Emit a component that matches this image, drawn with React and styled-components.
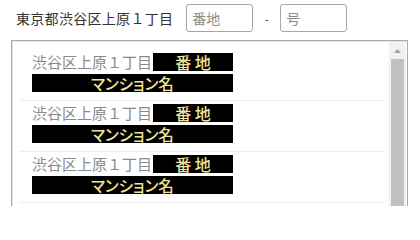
import styled, { createGlobalStyle } from "styled-components";

const GlobalStyle = createGlobalStyle`
  html, body {
    margin: 0;
    padding: 0;
    background: #fff;
    overflow: hidden;
  }
  body {
    font-family: "Noto Sans CJK JP", "Noto Sans", sans-serif;
  }
`;

const Container = styled.div`
  width: 420px;
  height: 206px;
`;

const AddressBar = styled.div`
  display: flex;
  align-items: center;
  padding: 4px 0 0 16px;
  height: 28px;
`;

const Prefix = styled.span`
  font-size: 14px;
  letter-spacing: 0.3px;
  color: #333;
  margin-right: 13px;
  white-space: nowrap;
`;

const Input = styled.input`
  box-sizing: border-box;
  width: 67px;
  height: 28px;
  padding: 0 5px;
  border: 1px solid #a6a6a6;
  border-radius: 3px;
  font-family: inherit;
  font-size: 14px;
  color: #333;
  outline: none;
  &::placeholder {
    color: #8c8c8c;
  }
`;

const Dash = styled.span`
  width: 27px;
  text-align: center;
  font-size: 13px;
  color: #666;
`;

const ListBox = styled.div`
  display: flex;
  margin: 8px 0 0 11px;
  width: 397px;
  height: 180px;
  box-sizing: border-box;
  border: 1px solid #a9a9a9;
  box-shadow: inset 1px 1px 0 #e6e6e6;
`;

const Rows = styled.div`
  flex: 1;
  padding: 9px 5px 0 7px;
`;

const Row = styled.div`
  padding: 3px 0 8px 13px;
  border-bottom: 1px solid #eeeeee;
`;

const Line = styled.div`
  display: flex;
  align-items: center;
  height: 18px;
  & + & {
    margin-top: 3px;
  }
`;

const Area = styled.span`
  width: 121px;
  font-size: 15px;
  line-height: 18px;
  color: #8a8a8a;
  white-space: nowrap;
`;

const Tag = styled.span`
  display: flex;
  align-items: center;
  justify-content: center;
  width: ${(props) => props.width}px;
  height: 18px;
  background: #000;
  color: #f2e39a;
  font-size: ${(props) => props.size}px;
  font-weight: 500;
  font-feature-settings: "palt";
  white-space: pre;
`;

const ScrollTrack = styled.div`
  display: flex;
  flex-direction: column;
  width: 17px;
  margin: 1px 1px 0 0;
  background: #f1f1f1;
`;

const ArrowButton = styled.div`
  display: flex;
  align-items: center;
  justify-content: center;
  height: 17px;
`;

const Thumb = styled.div`
  flex: 1;
  margin: 0 2px;
  background: #c1c1c1;
`;

const rows = [1, 2, 3];

export default function App() {
  return (
    <Container>
      <GlobalStyle />
      <AddressBar>
        <Prefix>東京都渋谷区上原１丁目</Prefix>
        <Input placeholder="番地" />
        <Dash>-</Dash>
        <Input placeholder="号" />
      </AddressBar>
      <ListBox>
        <Rows>
          {rows.map((id) => (
            <Row key={id}>
              <Line>
                <Area>渋谷区上原１丁目</Area>
                <Tag width={80} size={16}>
                  番 地
                </Tag>
              </Line>
              <Line>
                <Tag width={201} size={15.5}>
                  マンション名
                </Tag>
              </Line>
            </Row>
          ))}
        </Rows>
        <ScrollTrack>
          <ArrowButton>
            <svg width="7" height="4" viewBox="0 0 7 4">
              <path d="M0 4 L3.5 0 L7 4 Z" fill="#a3a3a3" />
            </svg>
          </ArrowButton>
          <Thumb />
        </ScrollTrack>
      </ListBox>
    </Container>
  );
}
